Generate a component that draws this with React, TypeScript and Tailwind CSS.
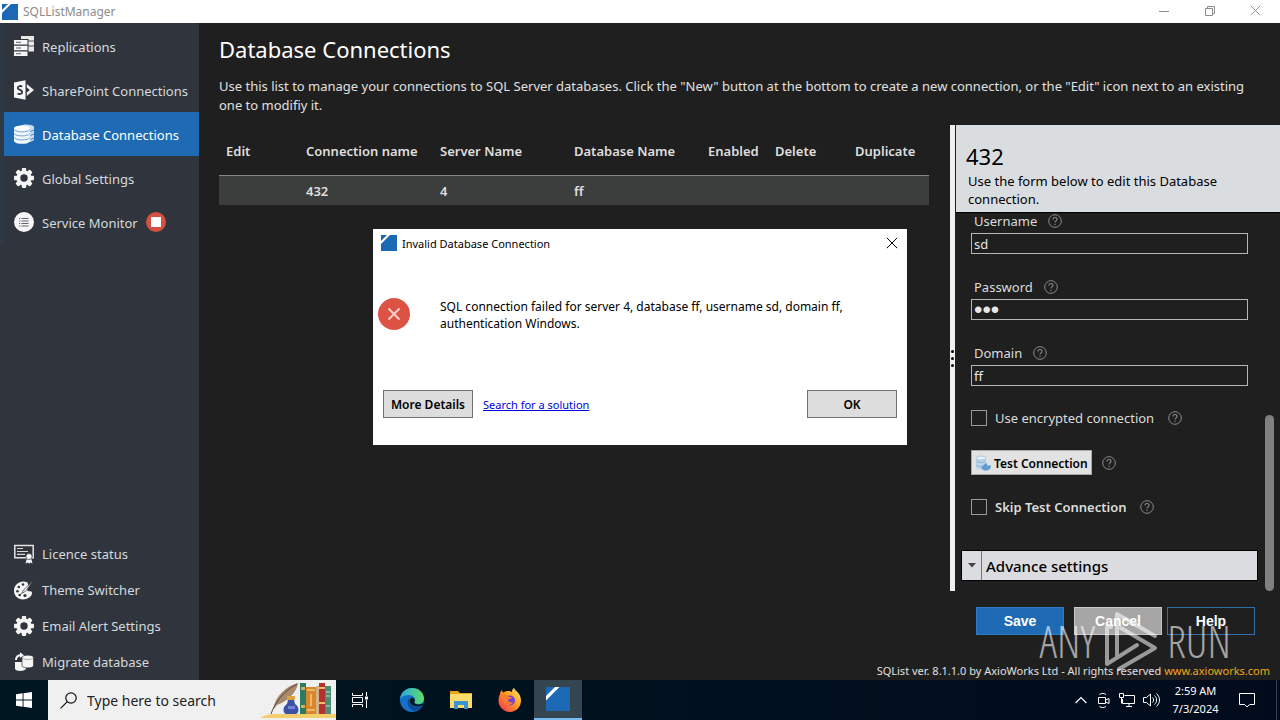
import type { ReactNode } from "react";

const ui = "font-['Noto_Sans','Open_Sans',sans-serif]";

function AppLogo({ className }: { className: string }) {
  return (
    <svg viewBox="0 0 16 16" className={className} aria-hidden="true">
      <path d="M0 0h16v16H0z" fill="#1b69b5" />
      <path d="M0 6 6 0h3L0 9z" fill="#fff" />
    </svg>
  );
}

function GearIcon() {
  return (
    <svg viewBox="0 0 20 20" className="size-5" aria-hidden="true">
      <g fill="#f5f5f5">
        {[0, 45, 90, 135].map((a) => (
          <rect key={a} x="7.8" y="0" width="4.4" height="20" rx="1" transform={`rotate(${a} 10 10)`} />
        ))}
        <circle cx="10" cy="10" r="7.6" />
      </g>
      <circle cx="10" cy="10" r="3.7" fill="#2f343d" />
    </svg>
  );
}

function ReplicationIcon() {
  return (
    <svg viewBox="0 0 20 20" className="size-5" aria-hidden="true">
      <path d="M7 0h13v15.500h-5.500V3H7z" fill="#e8e8e8" />
      <path d="M14 5h6M14 10h6" stroke="#2f343d" strokeWidth=".8" />
      <path d="M0 4h13.500v4.500H0zM0 9.700h13.500v4.500H0zM0 15.400h13.500V20H0z" fill="#f7f7f7" />
      <path d="M2 5.800h5v1H2zm0 5.700h5v1H2zm0 5.700h5v1H2z" fill="#555b65" />
    </svg>
  );
}

function SharePointIcon() {
  return (
    <svg viewBox="0 0 20 20" className="size-5" aria-hidden="true">
      <path d="M0 2.500 11.500.3v19.400L0 17.500z" fill="#f7f7f7" />
      <path d="M12.800 4v3.600l3 2.400-3 2.400V16l7.200-6z" fill="#f0f0f0" />
      <path d="M8.200 6.600C7 5.700 3.800 5.600 3.800 7.900c0 2.200 4.400 1.900 4.400 4.100 0 2.400-3.200 2.400-4.600 1.500" fill="none" stroke="#2f343d" strokeWidth="1.800" />
    </svg>
  );
}

function DatabaseIcon() {
  return (
    <svg viewBox="0 0 20 20" className="size-5" aria-hidden="true">
      <path d="M6 2c2-2.200 12-2.200 14 .5v13c-.5 1.500-3 2.300-5 2.500z" fill="#c9dcef" />
      <path d="M0 4v13c1 3.800 15 3.800 16 0V4z" fill="#f2f7fc" />
      <ellipse cx="8" cy="4.200" rx="8" ry="2.700" fill="#fff" />
      <path d="M0 5.500c2 3.200 14 3.200 16 0M0 9.500c2 3.200 14 3.200 16 0M0 13.500c2 3.200 14 3.200 16 0" fill="none" stroke="#5f9bd3" strokeWidth=".9" />
      <path d="M16.500 7.500 20 6M16.500 11.500 20 10M16.500 15.500 20 14" stroke="#1e6bb3" strokeWidth=".8" />
    </svg>
  );
}

function MonitorIcon() {
  return (
    <svg viewBox="0 0 20 20" className="size-5" aria-hidden="true">
      <circle cx="10" cy="10" r="10" fill="#f5f5f5" />
      <path d="M7.500 6.500h7M7.500 9h7M7.500 11.500h7M7.500 14h7" stroke="#60656d" strokeWidth="1.200" />
      <path d="M5 6.500h1.300M5 9h1.300M5 11.500h1.300M5 14h1.300" stroke="#60656d" strokeWidth="1.200" />
    </svg>
  );
}

function LicenceIcon() {
  return (
    <svg viewBox="0 0 20 20" className="size-5" aria-hidden="true">
      <path d="M.8 1.500h18.400v12.300H.8z" fill="none" stroke="#e4e4e4" strokeWidth="1.500" />
      <path d="M3 4.500h6M3 7.500h11M3 10.300h8" stroke="#d8d8d8" strokeWidth="1.200" />
      <path d="m13 14-1.500 5.500 2.500-1 1.200 1.200 1-1.200 2.300 1L17 14z" fill="#f5f5f5" />
      <circle cx="15" cy="12.500" r="3.100" fill="#f5f5f5" stroke="#2f343d" strokeWidth=".7" />
    </svg>
  );
}

function PaletteIcon() {
  return (
    <svg viewBox="0 0 20 20" className="size-5" aria-hidden="true">
      <path d="M13.500 2.500C7-.5 0 4 0 10.800 0 16 4 19.500 9 19.500c4.500 0 9-3 9-6.500 0-2.200-2.500-1.500-4-2-1.500-.6-.5-2.500.5-4z" fill="#f5f5f5" />
      <path d="M19.500.3 10 9.500l-2.500 4 4-2.200z" fill="#f5f5f5" stroke="#2f343d" strokeWidth=".7" />
      <g fill="#2f343d">
        <circle cx="9" cy="4.500" r="1.300" />
        <circle cx="4.800" cy="7" r="1.300" />
        <circle cx="3.500" cy="11.200" r="1.300" />
        <circle cx="5.700" cy="15" r="1.300" />
        <circle cx="11" cy="15.500" r="1.600" />
      </g>
    </svg>
  );
}

function MigrateIcon() {
  return (
    <svg viewBox="0 0 20 20" className="size-5" aria-hidden="true">
      <path d="M1 10v7c1 2.500 9 2.500 11 0v-7z" fill="#f5f5f5" />
      <path d="M8 5v9c1 2.500 10.500 2.500 11.500 0V5c-1-2.500-10.500-2.500-11.500 0z" fill="#f5f5f5" stroke="#2f343d" strokeWidth=".7" />
      <path d="M8.300 6c1.500 2 9.500 2 11 0" fill="none" stroke="#8b9097" strokeWidth=".7" />
      <path d="M2 8c0-3.500 2-4.800 5-4.800" fill="none" stroke="#f5f5f5" strokeWidth="2" />
      <path d="m6 .3 4 3-4 2.700z" fill="#f5f5f5" />
    </svg>
  );
}

function HelpIcon() {
  return (
    <svg viewBox="0 0 14 14" className="size-3.5 shrink-0" fill="none" stroke="#8a8a8a" aria-hidden="true">
      <circle cx="7" cy="7" r="6.300" />
      <path d="M5 5.400c0-2.500 4-2.500 4 0 0 1.500-2 1.500-2 3.100M7 9.700v1.200" strokeWidth="1.100" />
    </svg>
  );
}

function CloseIcon({ className }: { className: string }) {
  return (
    <svg viewBox="0 0 12 12" className={className} stroke="currentColor" aria-hidden="true">
      <path d="m.8.8 10.400 10.400M11.200.8.800 11.200" />
    </svg>
  );
}

interface NavItem {
  label: string;
  icon: ReactNode;
  active?: boolean;
  stopped?: boolean;
}

const mainNav: NavItem[] = [
  { label: "Replications", icon: <ReplicationIcon /> },
  { label: "SharePoint Connections", icon: <SharePointIcon /> },
  { label: "Database Connections", icon: <DatabaseIcon />, active: true },
  { label: "Global Settings", icon: <GearIcon /> },
  { label: "Service Monitor", icon: <MonitorIcon />, stopped: true },
];

const footerNav: NavItem[] = [
  { label: "Licence status", icon: <LicenceIcon /> },
  { label: "Theme Switcher", icon: <PaletteIcon /> },
  { label: "Email Alert Settings", icon: <GearIcon /> },
  { label: "Migrate database", icon: <MigrateIcon /> },
];

function TitleBar() {
  return (
    <header className="flex h-[23px] shrink-0 items-center justify-between bg-white pl-0.5 text-[#8c8c8c]">
      <div className="flex items-center gap-[5px]">
        <AppLogo className="size-4" />
        <span className="text-xs">SQLListManager</span>
      </div>
      <div className="flex h-full pr-0.5 pb-0.5">
        <button aria-label="Minimize" className="flex w-[46px] items-center justify-center">
          <svg viewBox="0 0 10 10" className="size-2.5" stroke="currentColor" aria-hidden="true">
            <path d="M0 5.500h10" />
          </svg>
        </button>
        <button aria-label="Restore" className="flex w-[45px] items-center justify-center">
          <svg viewBox="0 0 10 10" className="size-2.5" fill="none" stroke="currentColor" aria-hidden="true">
            <path d="M.5 2.500h7v7h-7zM2.500 2.500v-2h7v7h-2" />
          </svg>
        </button>
        <button aria-label="Close" className="flex w-[46px] items-center justify-center">
          <CloseIcon className="size-[11px]" />
        </button>
      </div>
    </header>
  );
}

function Sidebar() {
  return (
    <nav className="flex w-[199px] shrink-0 flex-col justify-between bg-[#2f343d] pt-px text-[13px] text-[#d6dade]">
      <ul>
        {mainNav.map((item) => (
          <li key={item.label} className="border-l-4 border-[#2d3945]">
            <a
              href="#"
              className={`flex h-11 items-center gap-2 pl-2.5 whitespace-nowrap ${item.active ? "bg-[#1e6bb3] text-white" : ""}`}
            >
              {item.icon}
              <span className="pt-1">{item.label}</span>
              {item.stopped && (
                <span className="flex size-5 items-center justify-center rounded-full bg-[#d4503f]">
                  <span className="size-2.5 bg-white" />
                </span>
              )}
            </a>
          </li>
        ))}
      </ul>
      <ul>
        {footerNav.map((item) => (
          <li key={item.label}>
            <a href="#" className="flex h-9 items-center gap-2 pl-3.5 whitespace-nowrap">
              {item.icon}
              <span className="pt-0.5">{item.label}</span>
            </a>
          </li>
        ))}
      </ul>
    </nav>
  );
}

function ConnectionsTable() {
  return (
    <table className="w-full table-fixed text-left text-[13px] font-semibold text-[#dedede]">
      <colgroup>
        <col className="w-[80px]" />
        <col className="w-[134px]" />
        <col className="w-[134px]" />
        <col className="w-[134px]" />
        <col className="w-[67px]" />
        <col className="w-[80px]" />
        <col />
      </colgroup>
      <thead>
        <tr className="h-[50px] whitespace-nowrap">
          {["Edit", "Connection name", "Server Name", "Database Name", "Enabled", "Delete", "Duplicate"].map((h) => (
            <th key={h} className="pt-1 pl-[7px] font-semibold">{h}</th>
          ))}
        </tr>
      </thead>
      <tbody>
        <tr className="h-[30px] border-t border-[#858585] bg-[#3c3d3d]">
          {["", "432", "4", "ff", "", "", ""].map((c, i) => (
            <td key={i} className="pt-0.5 pl-[7px]">{c}</td>
          ))}
        </tr>
      </tbody>
    </table>
  );
}

function Field({ id, label, value, type = "text" }: { id: string; label: string; value: string; type?: string }) {
  return (
    <div className="flex flex-col pr-2.5">
      <div className="flex items-center gap-[11px] pl-[3px]">
        <label htmlFor={id} className="leading-5">{label}</label>
        <HelpIcon />
      </div>
      <input
        id={id}
        type={type}
        defaultValue={value}
        className={`mt-0.5 h-[21px] w-full border border-[#b5b5b5] bg-transparent px-0.5 text-[#e6e6e6] outline-none ${type === "password" ? "font-['Liberation_Sans',sans-serif] text-2xl" : ""}`}
      />
    </div>
  );
}

function EditPanel() {
  return (
    <section className="flex w-[324px] shrink-0 flex-col">
      <div className="h-[88px] border-b border-black bg-[#dadde0] pt-[17px] pl-2.5 text-black">
        <h2 className="text-[22px] leading-7">432</h2>
        <p className="pt-0.5 pl-0.5 text-[13px] leading-[18px]">
          Use the form below to edit this Database
          <br />
          connection.
        </p>
      </div>
      <div className="flex grow justify-between pr-1.5">
        <form className="flex w-[302px] flex-col pl-[15px] text-[13px] text-[#dcdcdc]">
          <div className="-mt-1 flex flex-col gap-[23px] pt-0.5">
            <Field id="username" label="Username" value="sd" />
            <Field id="password" label="Password" value="abc" type="password" />
            <Field id="domain" label="Domain" value="ff" />
          </div>
          <div className="mt-[22px] flex h-5 items-center gap-2">
            <input id="encrypted" type="checkbox" className="size-4 appearance-none border border-[#9a9a9a]" />
            <label htmlFor="encrypted" className="pt-0.5">Use encrypted connection</label>
            <span className="pl-1.5"><HelpIcon /></span>
          </div>
          <div className="mt-[22px] flex items-center gap-2.5">
            <button type="button" className="flex h-[25px] items-center gap-[3px] border border-[#a8a8a8] bg-[#e2e2e2] px-[3px] text-xs font-semibold text-black">
              <svg viewBox="0 0 16 16" className="size-4" aria-hidden="true">
                <path d="M1 3v10c1 2 9 2 10 0V3z" fill="#b8d5ea" />
                <ellipse cx="6" cy="3" rx="5" ry="2" fill="#e4f1fa" stroke="#8cb3d0" strokeWidth=".6" />
                <path d="M1 6c1.500 2 8.500 2 10 0M1 10c1.500 2 8.500 2 10 0" fill="none" stroke="#83a9c8" strokeWidth=".7" />
                <path d="M9 9.500 12 8v2.500h4c0 3-2 5-5.500 5-2.500 0-3-1.500-4.500-2.500z" fill="#5d9bd0" />
              </svg>
              <span className="pt-0.5">Test Connection</span>
            </button>
            <HelpIcon />
          </div>
          <div className="mt-[22px] flex h-5 items-center gap-2">
            <input id="skip" type="checkbox" className="size-4 appearance-none border border-[#9a9a9a]" />
            <label htmlFor="skip" className="pt-0.5 font-semibold">Skip Test Connection</label>
            <span className="pl-1.5"><HelpIcon /></span>
          </div>
          <button type="button" className="mt-[33px] mb-2.5 -ml-2.5 flex h-[31px] items-stretch border border-black bg-[#dbdce0] text-left text-black">
            <span className="flex w-5 items-center justify-center border-r border-[#777]">
              <svg viewBox="0 0 8 5" className="h-[5px] w-2" aria-hidden="true">
                <path d="M0 0h8L4 4.500z" fill="#444" />
              </svg>
            </span>
            <span className="self-center pt-0.5 pl-1 text-[15px] font-medium">Advance settings</span>
          </button>
        </form>
        <div className="h-44 w-[9px] self-end rounded-full bg-[#808080]" />
      </div>
    </section>
  );
}

function Watermark() {
  return (
    <div className="pointer-events-none absolute right-[49px] bottom-2 flex h-[62px] items-center gap-2 font-['Open_Sans_Condensed_Light','Liberation_Sans_Narrow','Liberation_Sans',sans-serif] text-[44px] leading-none font-light text-white/60">
      <span>ANY</span>
      <svg viewBox="0 0 56 62" className="h-[62px] w-14" fill="none" stroke="#fff" strokeOpacity=".55" strokeWidth="4" strokeLinejoin="round" strokeLinecap="round" aria-hidden="true">
        <path d="M8 17H4v37l30-19M14 46V4l38 22M18 18l34 20-36 21" />
      </svg>
      <span>RUN</span>
    </div>
  );
}

function ErrorDialog() {
  return (
    <div role="dialog" aria-label="Invalid Database Connection" className="absolute top-[229px] left-1/2 flex w-[534px] -translate-x-1/2 flex-col bg-white text-black">
      <div className="flex h-7 items-center justify-between pr-[9px] pl-2">
        <div className="flex items-center gap-[5px]">
          <AppLogo className="size-4" />
          <span className="pt-0.5 text-[11px]">Invalid Database Connection</span>
        </div>
        <button aria-label="Close dialog">
          <CloseIcon className="size-3" />
        </button>
      </div>
      <div className="flex h-[132px] items-start pt-10 pl-[5px]">
        <svg viewBox="0 0 32 32" className="mt-px size-8" aria-hidden="true">
          <circle cx="16" cy="16" r="16" fill="#dc5344" />
          <path d="m10.500 10.500 11 11M21.500 10.500l-11 11" stroke="#f6cfc8" strokeWidth="2" />
        </svg>
        <p className="ml-[30px] w-[430px] pt-px text-xs leading-[17px]">
          SQL connection failed for server 4, database ff, username sd, domain ff, authentication Windows.
        </p>
      </div>
      <div className="mt-px flex h-[55px] items-start gap-2.5 px-2.5">
        <button className="h-7 w-[90px] border border-[#707070] bg-[#ddd] pt-0.5 text-xs font-semibold whitespace-nowrap">More Details</button>
        <a href="#" className="text-[11px] leading-[29px] text-[#0000e0] underline">Search for a solution</a>
        <button className="ml-auto h-7 w-[90px] border border-[#707070] bg-[#ddd] pt-0.5 text-xs font-semibold">OK</button>
      </div>
    </div>
  );
}

function SearchArt() {
  return (
    <svg viewBox="0 0 76 36" className="h-9 w-[76px]" aria-hidden="true">
      <path d="M0 36c6-4 12-4 18-4h58v4z" fill="#f3cf6b" />
      <path d="M13 28C15 14 26 4 38 1c-1 9-11 19-21 22z" fill="#a98a6d" />
      <path d="M11 32C15 20 24 9 37 2" fill="none" stroke="#5b4636" strokeWidth="1" />
      <path d="M27 14h8v4h-8z" fill="#d9a441" />
      <path d="M28 18h6l1 4c5 3 4 9 1 10H26c-3-1-4-7 1-10z" fill="#3d51a5" />
      <path d="M28 24h7v3h-7z" fill="#7384d1" />
      <path d="M40 1h6v31h-6z" fill="#2c7a62" />
      <path d="M41 5h4v3h-4zm0 18h4v3h-4z" fill="#d8ad4c" />
      <path d="M46 5h10v27H46z" fill="#d9862e" />
      <path d="M47 8h8M47 28h8M51 12v12" stroke="#f5ca70" strokeWidth="1.500" />
      <path d="M59 1h6v31h-6z" fill="#b3322e" />
      <path d="M59 6h6M59 21h6" stroke="#f0bd62" strokeWidth="2" />
      <path d="M65 4h6v28h-6z" fill="#4b8b78" />
      <path d="M66 10h4M66 14h4M66 24h4" stroke="#c7ddb7" />
      <path d="M56 4h3v28h-3z" fill="#d4b389" />
    </svg>
  );
}

function Taskbar() {
  return (
    <footer className="flex h-10 shrink-0 items-stretch justify-between bg-linear-to-r from-[#001620] to-[#010b1c] text-white">
      <div className="flex items-stretch">
        <button aria-label="Start" className="flex w-12 items-center justify-center">
          <svg viewBox="0 0 16 16" className="size-4" fill="#fff" aria-hidden="true">
            <path d="M0 2.200 6.600 1.300v6.200H0zM7.500 1.200 16 0v7.500H7.500zM0 8.400h6.600v6.300L0 13.800zM7.500 8.400H16V16l-8.500-1.200z" />
          </svg>
        </button>
        <div className="flex w-72 items-center bg-[#f0f0f0] pl-3 text-black">
          <svg viewBox="0 0 17 17" className="size-[17px]" fill="none" stroke="#111" strokeWidth="1.200" aria-hidden="true">
            <circle cx="11" cy="6" r="5.200" />
            <path d="M7.300 9.700.6 16.400" />
          </svg>
          <input aria-label="Search" placeholder="Type here to search" className="ml-2.5 min-w-0 flex-1 bg-transparent pt-0.5 text-sm outline-none placeholder:text-[#222]" />
          <SearchArt />
        </div>
        <button aria-label="Task view" className="flex w-12 items-center justify-center">
          <svg viewBox="0 0 16 16" className="size-4" fill="none" stroke="#fff" aria-hidden="true">
            <path d="M.5 1v2.500h10V1M.5 15v-2.500h10V15M.5 5.500h10v5H.5zM14.500 0v4M14.500 8v8" />
            <path d="M13 4.500h3v3h-3z" fill="#fff" stroke="none" />
          </svg>
        </button>
        <div className="flex pl-[3px]">
          <button aria-label="Microsoft Edge" className="flex w-[49px] items-center justify-center">
            <svg viewBox="0 0 24 24" className="size-6" aria-hidden="true">
              <defs>
                <linearGradient id="edgeTop" x1="0" y1="0" x2="1" y2="0">
                  <stop offset="0" stopColor="#2ba7e4" />
                  <stop offset="1" stopColor="#5fdb65" />
                </linearGradient>
              </defs>
              <circle cx="12" cy="12" r="12" fill="#1670c9" />
              <path d="M0 11C1 4 6 0 12 0c7 0 12 5 12 10.500 0 3.500-2.500 5.500-6 5.500-3 0-4.500-1-3.500-2.500C16 10 13 7 9 7c-4 0-7 1.500-9 4z" fill="url(#edgeTop)" />
              <path d="M9 10c-3 4-1 11 5 13 4-.5 7-3 8-5-7 3-14 0-13-8z" fill="#0c4a94" />
              <path d="M14.500 13.500c1.300-3-1.500-4.500-3.500-3.500-2 1.500-1.500 4.500 0 6 3 3 8 3 11.300 1.500.5-.6 1-1.500 1.200-2.500-3 2.300-10 2-9-1.500z" fill="#001620" />
            </svg>
          </button>
          <button aria-label="File Explorer" className="flex w-[49px] items-center justify-center">
            <svg viewBox="0 0 22 20" className="h-5 w-[22px]" aria-hidden="true">
              <path d="M0 1h8l2 2h12v4H0z" fill="#e8a321" />
              <path d="M0 4h22v14H0z" fill="#fbdb6c" />
              <path d="M4 19v-8h14v8h-4v-4H8v4z" fill="#3b93d0" />
            </svg>
          </button>
          <button aria-label="Firefox" className="flex w-[49px] items-center justify-center">
            <svg viewBox="0 0 24 24" className="size-6" aria-hidden="true">
              <defs>
                <linearGradient id="fox" x1="1" y1="0" x2="0" y2="1">
                  <stop offset="0" stopColor="#fff36b" />
                  <stop offset=".45" stopColor="#ff9a1f" />
                  <stop offset="1" stopColor="#f4265b" />
                </linearGradient>
              </defs>
              <path d="M2 6c0-2 1-3 2-4 0 1 .5 2 1.500 2.500C7 3 9 3 10 3c2 0 3 .5 4 1 0-2 .5-3 2-4 1 3 7 5 7 12.500C23 19 18 24 12 24S.500 19 .500 13C.500 10 1 8 2 6z" fill="url(#fox)" />
              <circle cx="12" cy="12.500" r="5" fill="#7143d8" />
              <path d="M4 8c3-2 6-1 7 1h3c-.5 2-4 2-4 3 0 2 3 3 5 2-1 4-9 4-10-1-.3-2-1-3-1-5z" fill="#ff7a29" />
            </svg>
          </button>
        </div>
        <button aria-label="SQLListManager" className="flex w-12 items-center justify-center border-b-2 border-[#76b9ed] bg-[#34454f]">
          <AppLogo className="size-6" />
        </button>
      </div>
      <div className="flex items-center pr-[3px]">
        <div className="flex items-center gap-2">
          <svg viewBox="0 0 12 8" className="h-2 w-3" fill="none" stroke="#fff" strokeWidth="1.200" aria-hidden="true">
            <path d="m.6 7 5.400-5.500L11.400 7" />
          </svg>
          <svg viewBox="0 0 16 16" className="size-4" fill="none" stroke="#fff" aria-hidden="true">
            <path d="M3.500 5.500h7v6h-7zM10.500 8l3.500-1.500v5L10.500 10M4.500 2.500c2-1.500 4.500-1.500 6.500 0M4.500 14.500c2 1.500 4.500 1.500 6.500 0" />
          </svg>
          <svg viewBox="0 0 16 16" className="size-4" fill="none" stroke="#fff" aria-hidden="true">
            <path d="M5.500 3.500h10v8H3.500V7M10 11.500v3M7 14.500h6M.5 1.500h4v4h-4zM2.500 5.500v6" />
          </svg>
          <svg viewBox="0 0 17 16" className="h-4 w-[17px]" fill="none" stroke="#fff" aria-hidden="true">
            <path d="M.5 5.500h3l4-3.500v12l-4-3.500h-3zM9.500 5.500c1.500 1.500 1.500 3.500 0 5M11.500 3.500c2.800 2.500 2.800 6.500 0 9M13.500 1.500c4 4 4 9 0 13" />
          </svg>
        </div>
        <div className="w-[71px] text-center text-[11px] leading-[18px]">
          <div>2:59 AM</div>
          <div>7/3/2024</div>
        </div>
        <button aria-label="Notifications" className="mr-[21px] ml-2 flex items-center">
          <svg viewBox="0 0 16 16" className="size-4" fill="none" stroke="#fff" aria-hidden="true">
            <path d="M.5 1.500h15v11h-5L8 15l-2.500-2.500h-5z" />
          </svg>
        </button>
        <div className="h-full w-px bg-[#3a4350]" />
      </div>
    </footer>
  );
}

export default function App() {
  return (
    <div className={`relative flex min-h-screen flex-col bg-[#1f1f1f] ${ui}`}>
      <TitleBar />
      <div className="flex grow">
        <Sidebar />
        <main className="relative flex min-w-0 grow flex-col pl-5 text-[#e0e0e0]">
          <h1 className="pt-2 text-[22px] leading-9 text-white">Database Connections</h1>
          <p className="pt-2.5 pr-4 pb-2.5 text-[13px] leading-[19px]">
            Use this list to manage your connections to SQL Server databases. Click the "New" button at the bottom to create a new connection, or the "Edit" icon next to an existing one to modifiy it.
          </p>
          <div className="flex grow">
            <div className="grow pr-[21px]">
              <ConnectionsTable />
            </div>
            <div className="mr-px flex w-[5px] shrink-0 flex-col items-center justify-center gap-1 bg-[#f0f0f0]">
              <span className="size-[3px] rounded-full bg-black" />
              <span className="size-[3px] rounded-full bg-black" />
              <span className="size-[3px] rounded-full bg-black" />
            </div>
            <EditPanel />
          </div>
          <div className="flex justify-end pt-4 pr-[25px] font-['Liberation_Sans',Arial,sans-serif] text-sm font-bold text-white">
            <button className="h-7 w-[88px] border border-[#2f7ac0] bg-[#1e6bb3]">Save</button>
            <button className="ml-2.5 h-7 w-[88px] border border-[#c8c8c8] bg-[#a6a6a6]">Cancel</button>
            <button className="ml-[5px] h-7 w-[88px] border border-[#2f6fab]">Help</button>
          </div>
          <p className="pt-[27px] pr-2.5 text-right text-[11px] leading-[18px]">
            SQList ver. 8.1.1.0 by AxioWorks Ltd - All rights reserved{" "}
            <a href="#" className="text-[#f0a818]">www.axioworks.com</a>
          </p>
          <Watermark />
        </main>
      </div>
      <Taskbar />
      <ErrorDialog />
    </div>
  );
}
